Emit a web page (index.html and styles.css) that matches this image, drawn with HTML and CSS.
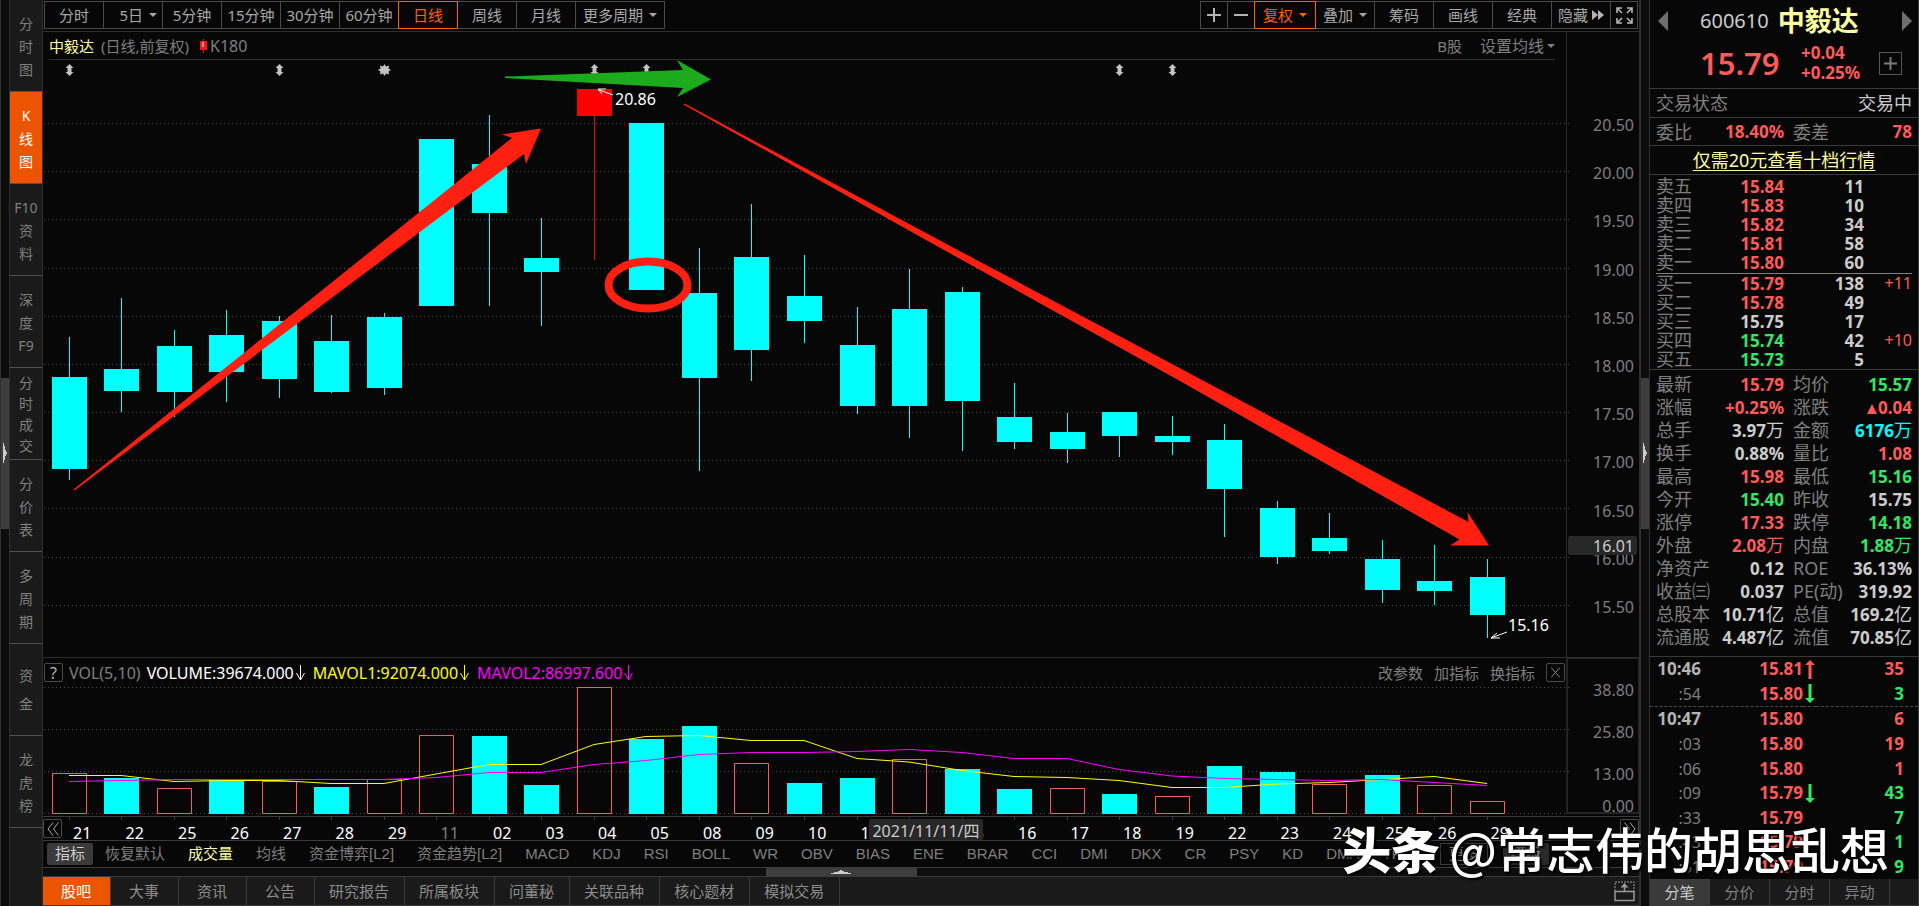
FILE: index.html
```html
<!DOCTYPE html>
<html lang="zh-CN">
<head>
<meta charset="utf-8">
<title>中毅达 600610</title>
<link rel="stylesheet" href="styles.css">
</head>
<body>
<div class="app">
  <div class="strip"><button class="strip-thumb" aria-label="展开左栏"><svg width="4" height="20" viewBox="0 0 4 20"><path d="M0 0h1v3h1v4h1v2h1v2h-1v2h-1v4h-1v3h-1z" fill="#ccc"/></svg></button></div>
  <nav class="side">
    <a class="side-item" href="#"><span>分</span><span>时</span><span>图</span></a>
    <a class="side-item active" href="#"><span>K</span><span>线</span><span>图</span></a>
    <a class="side-item" href="#"><span>F10</span><span>资</span><span>料</span></a>
    <a class="side-item" href="#"><span>深</span><span>度</span><span>F9</span></a>
    <a class="side-item four" href="#"><span>分</span><span>时</span><span>成</span><span>交</span></a>
    <a class="side-item" href="#"><span>分</span><span>价</span><span>表</span></a>
    <a class="side-item" href="#"><span>多</span><span>周</span><span>期</span></a>
    <a class="side-item two" href="#"><span>资</span><span>金</span></a>
    <a class="side-item" href="#"><span>龙</span><span>虎</span><span>榜</span></a>
  </nav>

  <main class="main">
    <header class="toolbar">
      <div class="group">
        <button class="btn">分时</button>
        <button class="btn menu">5日<i class="caret"></i></button>
        <button class="btn">5分钟</button>
        <button class="btn">15分钟</button>
        <button class="btn">30分钟</button>
        <button class="btn">60分钟</button>
        <button class="btn on">日线</button>
        <button class="btn">周线</button>
        <button class="btn">月线</button>
        <button class="btn more">更多周期<i class="caret"></i></button>
      </div>
      <div class="group">
        <button class="btn icon" aria-label="放大"><svg width="14" height="14" viewBox="0 0 14 14"><path d="M7 0v14M0 7h14" stroke="#b4b4b4" stroke-width="2"/></svg></button>
        <button class="btn icon" aria-label="缩小"><svg width="14" height="14" viewBox="0 0 14 14"><path d="M0 7h14" stroke="#b4b4b4" stroke-width="2"/></svg></button>
        <button class="btn on wide">复权<i class="caret"></i></button>
        <button class="btn">叠加<i class="caret"></i></button>
        <button class="btn">筹码</button>
        <button class="btn">画线</button>
        <button class="btn">经典</button>
        <button class="btn hide">隐藏<svg width="12" height="10" viewBox="0 0 12 10"><path d="M0 0l6 5-6 5zM6 0l6 5-6 5z" fill="#b4b4b4"/></svg></button>
        <button class="btn icon" aria-label="全屏"><svg width="17" height="17" viewBox="0 0 17 17" fill="none" stroke="#b4b4b4" stroke-width="1.6"><path d="M1 6V1h5M1 1l5 5M11 1h5v5M16 1l-5 5M1 11v5h5M1 16l5-5M11 16h5v-5M16 16l-5-5"/></svg></button>
      </div>
    </header>

    <section class="pane price">
      <div class="plot">
        <div class="plot-head">
          <h1 class="name">中毅达</h1>
          <span class="dim">(日线,前复权)</span>
          <svg class="k-icon" width="7" height="14" viewBox="0 0 7 14"><path d="M0 2h7v9h-7zM3 0h1v14h-1z" fill="#f01818"/><path d="M2 3h2v5h-2z" fill="#ff8a8a"/></svg>
          <span class="dim k180">K180</span>
          <a class="dim b-share" href="#">B股</a>
          <button class="plain ma-set">设置均线<i class="caret"></i></button>
        </div>
        <svg class="chart" viewBox="43 60 1523 597">
          <g class="grid">
            <path d="M44 123.500H1570M44 171.500H1570M44 219.500H1570M44 268.500H1570M44 316.500H1570M44 364.500H1570M44 412.500H1570M44 460.500H1570M44 508.500H1570M44 557.500H1570M44 605.500H1570"/>
          </g>
          <g fill="#c4c4c4">
            <path id="ud" d="M69.500 64l4 4h-2v4h2l-4 4l-4-4h2v-4h-2z"/>
            <use href="#ud" x="210"/><use href="#ud" x="525"/><use href="#ud" x="577"/><use href="#ud" x="1050"/><use href="#ud" x="1103"/>
            <path d="M384.500 64l1.500 2.500 3-1-.5 3 2.500 1.500-2.500 1.500.5 3-3-1-1.500 2.500-1.500-2.500-3 1 .5-3-2.500-1.500 2.500-1.500-.5-3 3 1z"/>
          </g>
          <path class="up" d="M577 89h35v27h-35zM594 116h1v144h-1z"/>
          <path class="down" d="M52 377h35v92h-35zM104 369h35v22h-35zM157 346h35v46h-35zM209 335h35v37h-35zM262 321h35v58h-35zM314 341h35v51h-35zM367 317h35v71h-35zM419 139h35v167h-35zM472 164h35v49h-35zM524 258h35v14h-35zM629 123h35v167h-35zM682 293h35v85h-35zM734 257h35v93h-35zM787 296h35v25h-35zM840 345h35v61h-35zM892 309h35v97h-35zM945 292h35v109h-35zM997 417h35v25h-35zM1050 432h35v17h-35zM1102 412h35v24h-35zM1155 436h35v6h-35zM1207 440h35v49h-35zM1260 508h35v49h-35zM1312 538h35v13h-35zM1365 559h35v31h-35zM1417 581h35v10h-35zM1470 577h35v38h-35z"/>
          <g class="wick">
            <path d="M69.500 337V480M121.500 298V412M174.500 330V417M226.500 310V402M279.500 316V398M331.500 315V393M384.500 313V395M489.500 115V306M541.500 218V326M699.500 248V471M751.500 204V381M804.500 255V343M857.500 307V414M909.500 269V438M962.500 287V451M1014.500 383V449M1067.500 413V463M1119.500 430V457M1172.500 416V455M1224.500 424V537M1277.500 501V564M1329.500 513V554M1382.500 540V603M1434.500 545V605M1487.500 559V638"/>
          </g>
          <g class="pointer">
            <path d="M613 95L598 89.500M606 89h-8l4 5M1507 632L1491 638M1497 633l-6 5h9"/>
          </g>
          <text class="tag" x="615" y="105">20.86</text>
          <text class="tag" x="1508" y="631">15.16</text>
          <path d="M505 76.500L683 70L677 60L711 79.500L677 97L683 88L505 78z" fill="#1cab1c"/>
          <g fill="#ff2012">
            <path d="M73.500 489.500L512 138L502 134.500L541 128.500L526 164L524 154L74.500 490.500z"/>
            <path d="M684.500 103.500L939 240L1202 380L1468.500 522L1467.500 512L1489 545.500H1450L1459.500 539.500L1180 381L926 240L683.500 104.500z"/>
          </g>
          <ellipse cx="648" cy="285" rx="39.500" ry="23.500" fill="none" stroke="#ff2012" stroke-width="8"/>
        </svg>
      </div>
      <div class="axis price-axis">
        <span>20.50</span><span>20.00</span><span>19.50</span><span>19.00</span><span>18.50</span><span>18.00</span><span>17.50</span><span>17.00</span><span>16.50</span><span>16.00</span><span>15.50</span>
        <b class="cursor-price">16.01</b>
      </div>
    </section>

    <section class="pane volume">
      <div class="plot">
        <div class="vol-head">
          <button class="sq" aria-label="帮助">?</button>
          <span class="dim vol-name">VOL(5,10)</span>
          <span class="v0">VOLUME:39674.000<svg class="dn" viewBox="0 0 9 16"><path d="M4.500 0v15M0.500 8l4 7 4-7"/></svg></span>
          <span class="v1">MAVOL1:92074.000<svg class="dn" viewBox="0 0 9 16"><path d="M4.500 0v15M0.500 8l4 7 4-7"/></svg></span>
          <span class="v2">MAVOL2:86997.600<svg class="dn" viewBox="0 0 9 16"><path d="M4.500 0v15M0.500 8l4 7 4-7"/></svg></span>
          <div class="vol-tools">
            <button class="plain">改参数</button><button class="plain">加指标</button><button class="plain">换指标</button>
            <button class="sq" aria-label="关闭"><svg width="9" height="11" viewBox="0 0 9 11"><path d="M0 0.500l9 10M9 0.500l-9 10" stroke="#8a8a8a"/></svg></button>
          </div>
        </div>
        <svg class="chart" viewBox="43 687 1523 130">
          <g class="grid">
            <path d="M44 687.500H1570M44 729.500H1570M44 771.500H1570M44 813.500H1570"/>
          </g>
          <path d="M43 816.500H1640M69.500 817v3M121.500 817v3M174.500 817v3M226.500 817v3M279.500 817v3M331.500 817v3M384.500 817v3M436.500 817v3M489.500 817v3M541.500 817v3M594.500 817v3M646.500 817v3M699.500 817v3M751.500 817v3M804.500 817v3M857.500 817v3M909.500 817v3M962.500 817v3M1014.500 817v3M1067.500 817v3M1119.500 817v3M1172.500 817v3M1224.500 817v3M1277.500 817v3M1329.500 817v3M1382.500 817v3M1434.500 817v3M1487.500 817v3" stroke="#3a3a3a"/>
          <path class="bar-up" d="M52.500 773.500h34v40h-34zM157.500 788.500h34v25h-34zM262.500 781.500h34v32h-34zM367.500 779.500h34v34h-34zM419.500 735.500h34v78h-34zM577.500 687.500h34v126h-34zM734.500 763.500h34v50h-34zM892.500 759.500h34v54h-34zM1050.500 788.500h34v25h-34zM1155.500 796.500h34v17h-34zM1312.500 784.500h34v29h-34zM1417.500 785.500h34v28h-34zM1470.500 801.500h34v12h-34z"/>
          <path class="down" d="M104 778h35v36h-35zM209 780h35v34h-35zM314 787h35v27h-35zM472 736h35v78h-35zM524 785h35v29h-35zM629 739h35v75h-35zM682 726h35v88h-35zM787 783h35v31h-35zM840 778h35v36h-35zM945 769h35v45h-35zM997 789h35v25h-35zM1102 794h35v20h-35zM1207 766h35v48h-35zM1260 772h35v42h-35zM1365 775h35v39h-35z"/>
          <polyline class="ma1" points="69,775.500 121,775.500 174,781.500 226,780.500 279,780.500 331,783.500 384,783.500 436,774 489,764.500 541,764.500 594,744.500 646,736.500 699,735.500 751,740.500 804,740.500 857,758.500 909,762 962,770.500 1014,776.500 1067,777.500 1119,780.500 1172,787.500 1224,787.500 1277,784 1329,782.500 1382,779.500 1434,776.500 1487,783.500"/>
          <polyline class="ma2" points="69,781.500 121,780.500 174,779.500 384,779.500 436,777.500 489,772.500 541,772.500 594,764.500 646,760.500 699,754.500 751,752.500 804,752.500 857,751.500 909,749.500 962,752.500 1014,758.500 1067,758.500 1119,769.500 1172,776 1224,778.500 1277,779.500 1329,780.500 1382,779.500 1434,782.500 1487,785.500"/>
        </svg>
      </div>
      <div class="axis vol-axis"><span>38.80</span><span>25.80</span><span>13.00</span><span>0.00</span></div>
    </section>

    <div class="dates">
      <button class="sq page" aria-label="向左"><svg width="12" height="14" viewBox="0 0 12 14"><path d="M6 0.500L1 7l5 6.500M11.500 0.500l-5 6.500 5 6.500"/></svg></button>
      <div class="days">
        <span>21</span><span>22</span><span>25</span><span>26</span><span>27</span><span>28</span><span>29</span><span class="dim">11</span><span>02</span><span>03</span><span>04</span><span>05</span><span>08</span><span>09</span><span>10</span><span>11</span><span>12</span><span>15</span><span>16</span><span>17</span><span>18</span><span>19</span><span>22</span><span>23</span><span>24</span><span>25</span><span>26</span><span>29</span>
      </div>
      <b class="cursor-date">2021/11/11/四</b>
      <button class="sq page" aria-label="向右"><svg width="12" height="14" viewBox="0 0 12 14"><path d="M0.500 0.500l5 6.500-5 6.500M6 0.500L11 7l-5 6.500"/></svg></button>
    </div>

    <nav class="indicators">
      <button class="ind chip">指标</button><button class="ind">恢复默认</button><button class="ind sel">成交量</button><button class="ind">均线</button><button class="ind">资金博弈[L2]</button><button class="ind">资金趋势[L2]</button><button class="ind">MACD</button><button class="ind">KDJ</button><button class="ind">RSI</button><button class="ind">BOLL</button><button class="ind">WR</button><button class="ind">OBV</button><button class="ind">BIAS</button><button class="ind">ENE</button><button class="ind">BRAR</button><button class="ind">CCI</button><button class="ind">DMI</button><button class="ind">DKX</button><button class="ind">CR</button><button class="ind">PSY</button><button class="ind">KD</button><button class="ind">DMA</button><button class="ind">TRIX</button><button class="ind outline">更多</button><button class="ind chip tpl">模板</button>
    </nav>

    <div class="hsplit"><button class="hthumb" aria-label="展开"><svg width="20" height="4" viewBox="0 0 20 4"><path d="M0 4v-1h3v-1h4v-1h2v-1h2v1h2v1h4v1h3v1z" fill="#ccc"/></svg></button></div>

    <footer class="tabs">
      <a class="tab active" href="#">股吧</a><a class="tab" href="#">大事</a><a class="tab" href="#">资讯</a><a class="tab" href="#">公告</a><a class="tab" href="#">研究报告</a><a class="tab" href="#">所属板块</a><a class="tab" href="#">问董秘</a><a class="tab" href="#">关联品种</a><a class="tab" href="#">核心题材</a><a class="tab" href="#">模拟交易</a>
      <button class="plain popout" aria-label="弹出"><svg width="21" height="21" viewBox="0 0 21 21" fill="none" stroke="#999"><path d="M1 10V1h19v9" stroke-dasharray="2 1"/><path d="M1 10.500h19v9H1zM10.500 10V4" stroke-width="1.500"/><path d="M6.500 6.500l4-4.500 4 4.500z" fill="#999" stroke="none"/></svg></button>
    </footer>
  </main>

  <div class="strip right"><button class="strip-thumb" aria-label="收起右栏"><svg width="4" height="20" viewBox="0 0 4 20"><path d="M0 0h1v3h1v4h1v2h1v2h-1v2h-1v4h-1v3h-1z" fill="#ccc"/></svg></button></div>

  <aside class="quote">
    <div class="q-title">
      <button class="plain" aria-label="上一只"><svg width="10" height="20" viewBox="0 0 10 20"><path d="M10 0v20L0 10z" fill="#6e6e6e"/></svg></button>
      <span class="code">600610</span>
      <strong class="q-name">中毅达</strong>
      <button class="plain next" aria-label="下一只"><svg width="10" height="20" viewBox="0 0 10 20"><path d="M0 0v20l10-10z" fill="#6e6e6e"/></svg></button>
    </div>
    <div class="q-price r">
      <strong class="big">15.79</strong>
      <div class="chg"><span>+0.04</span><span>+0.25%</span></div>
      <button class="add" aria-label="加自选"><svg width="13" height="13" viewBox="0 0 13 13"><path d="M6.500 0v13M0 6.500h13" stroke="#7a7a7a" stroke-width="2"/></svg></button>
    </div>
    <div class="line state"><span class="lab">交易状态</span><span class="trading">交易中</span></div>
    <div class="line ratio"><span class="lab">委比</span><b class="r">18.40%</b><span class="lab l2">委差</span><b class="r">78</b></div>
    <div class="line promo"><a href="#">仅需20元查看十档行情</a></div>

    <table class="book">
      <tr><th>卖五</th><td class="r">15.84</td><td>11</td><td></td></tr>
      <tr><th>卖四</th><td class="r">15.83</td><td>10</td><td></td></tr>
      <tr><th>卖三</th><td class="r">15.82</td><td>34</td><td></td></tr>
      <tr><th>卖二</th><td class="r">15.81</td><td>58</td><td></td></tr>
      <tr><th>卖一</th><td class="r">15.80</td><td>60</td><td></td></tr>
    </table>
    <table class="book buy">
      <tr><th>买一</th><td class="r">15.79</td><td>138</td><td class="r d">+11</td></tr>
      <tr><th>买二</th><td class="r">15.78</td><td>49</td><td></td></tr>
      <tr><th>买三</th><td>15.75</td><td>17</td><td></td></tr>
      <tr><th>买四</th><td class="g">15.74</td><td>42</td><td class="r d">+10</td></tr>
      <tr><th>买五</th><td class="g">15.73</td><td>5</td><td></td></tr>
    </table>

    <div class="stats-wrap">
    <table class="stats">
      <tr><th>最新</th><td class="r">15.79</td><th>均价</th><td class="g">15.57</td></tr>
      <tr><th>涨幅</th><td class="r">+0.25%</td><th>涨跌</th><td class="r"><svg width="10" height="10" viewBox="0 0 10 10"><path d="M5 0l5 10H0z" fill="#ff5a5a"/></svg>0.04</td></tr>
      <tr><th>总手</th><td>3.97<i>万</i></td><th>金额</th><td class="c">6176<i>万</i></td></tr>
      <tr><th>换手</th><td>0.88%</td><th>量比</th><td class="r">1.08</td></tr>
      <tr><th>最高</th><td class="r">15.98</td><th>最低</th><td class="g">15.16</td></tr>
      <tr><th>今开</th><td class="g">15.40</td><th>昨收</th><td>15.75</td></tr>
      <tr><th>涨停</th><td class="r">17.33</td><th>跌停</th><td class="g">14.18</td></tr>
      <tr><th>外盘</th><td class="r">2.08<i>万</i></td><th>内盘</th><td class="g">1.88<i>万</i></td></tr>
      <tr><th>净资产</th><td>0.12</td><th>ROE</th><td>36.13%</td></tr>
      <tr><th>收益㈢</th><td>0.037</td><th>PE(动)</th><td>319.92</td></tr>
      <tr><th>总股本</th><td>10.71<i>亿</i></td><th>总值</th><td>169.2<i>亿</i></td></tr>
      <tr><th>流通股</th><td>4.487<i>亿</i></td><th>流值</th><td>70.85<i>亿</i></td></tr>
    </table>
    </div>

    <div class="ticks-wrap">
    <table class="ticks">
      <tr><th class="full">10:46</th><td class="r">15.81</td><td class="ar"><svg width="10" height="19" viewBox="0 0 10 19"><path d="M5 0l5 5H6.500v14h-3V5H0z" fill="#ff5a5a"/></svg></td><td class="r">35</td></tr>
      <tr><th>:54</th><td class="r">15.80</td><td class="ar"><svg width="10" height="19" viewBox="0 0 10 19"><path d="M5 19l5-5H6.500V0h-3v14H0z" fill="#33e666"/></svg></td><td class="g">3</td></tr>
      <tr class="minute"><th class="full">10:47</th><td class="r">15.80</td><td></td><td class="r">6</td></tr>
      <tr><th>:03</th><td class="r">15.80</td><td></td><td class="r">19</td></tr>
      <tr><th>:06</th><td class="r">15.80</td><td></td><td class="r">1</td></tr>
      <tr><th>:09</th><td class="r">15.79</td><td class="ar"><svg width="10" height="19" viewBox="0 0 10 19"><path d="M5 19l5-5H6.500V0h-3v14H0z" fill="#33e666"/></svg></td><td class="g">43</td></tr>
      <tr><th>:33</th><td class="r">15.79</td><td></td><td class="g">7</td></tr>
      <tr><th>:43</th><td class="r">15.79</td><td></td><td class="g">1</td></tr>
      <tr><th>:51</th><td class="r">15.79</td><td></td><td class="g">9</td></tr>
    </table>
    </div>
    <nav class="q-tabs"><a class="active" href="#">分笔</a><a href="#">分价</a><a href="#">分时</a><a href="#">异动</a></nav>
  </aside>
</div>
<div class="watermark"><b>头条</b><span>@常志伟的胡思乱想</span></div>
</body>
</html>
```

FILE: styles.css
```css
* { box-sizing: border-box; }

body {
  margin: 0;
  background: #070707;
  color: #a8a8a8;
  font-family: "Noto Sans", "Noto Sans CJK SC", sans-serif;
  font-size: 15px;
  line-height: 20px;
  position: relative;
  overflow-x: hidden;
}

a { color: inherit; text-decoration: none; }
button {
  background: none;
  border: 0;
  padding: 0;
  margin: 0;
  color: inherit;
  font: inherit;
  white-space: nowrap;
}
svg { display: block; flex: none; }
table { border-collapse: collapse; table-layout: fixed; width: 100%; }
th, td { padding: 0; white-space: nowrap; }

.app {
  display: grid;
  grid-template-columns: 10px 32px minmax(0, 1fr) 10px 269px;
  min-height: 100vh;
}

.r { color: #ff5a5a; }
.g { color: #33e666; }
.c { color: #00ffff; }
.dim { color: #7f7f7f; }

.caret {
  border: 4px solid transparent;
  border-top: 4px solid currentColor;
  border-bottom: 0;
}

/* Collapsible edge strips */
.strip {
  background: #0d0d0d;
  border: solid #303030;
  border-width: 0 1px;
  display: flex;
  align-items: center;
}
.strip-thumb {
  width: 100%;
  height: 151px;
  background: #3d3d3d;
  display: flex;
  align-items: center;
  justify-content: center;
}

/* Left navigation */
.side { background: #1a1a1a; }
.side-item {
  display: flex;
  flex-direction: column;
  align-items: center;
  justify-content: center;
  height: 92px;
  border-bottom: 1px solid #505050;
  color: #7f7f7f;
  font-size: 14px;
  line-height: 23px;
  padding-top: 1px;
}
.side-item.four { line-height: 21px; }
.side-item.two { line-height: 28px; }
.side-item.active { background: #eb5500; color: #fff; }

/* Main column */
.main {
  display: flex;
  flex-direction: column;
  border: solid #2e2e2e;
  border-width: 0 1px;
}
.toolbar {
  display: flex;
  justify-content: space-between;
  height: 32px;
  padding: 1px 1px 0;
  border-bottom: 1px solid #2e2e2e;
}
.group { display: flex; }
.btn {
  display: flex;
  align-items: center;
  justify-content: center;
  gap: 6px;
  width: 60px;
  height: 28px;
  margin-right: -1px;
  border: 1px solid #4a4a4a;
}
.group .btn:last-child { margin-right: 0; }
.btn.menu { justify-content: flex-end; padding-right: 5px; }
.btn.more { width: 90px; }
.btn.icon { width: 28px; }
.btn.wide { width: 62px; }
.btn.hide { gap: 4px; }
.btn.on { color: #ff6000; border-color: #ff6000; position: relative; }

.pane { display: grid; grid-template-columns: minmax(0, 1fr) 73px; }
.price { flex: 1; }
.plot { display: flex; flex-direction: column; }
.plot-head {
  display: flex;
  align-items: center;
  height: 28px;
  margin: 0 11px 0 6px;
  border-bottom: 1px solid #2e2e2e;
}
.name {
  margin: 0 7px 0 0;
  font-size: 15px;
  font-weight: 400;
  color: #ffffa0;
}
.k-icon { margin: 0 3px 0 11px; }
.k180 { font-size: 16px; }
.b-share { margin-left: auto; margin-right: 18px; }
.plain { color: #7f7f7f; }
.ma-set { display: flex; align-items: center; gap: 3px; font-size: 16px; }
.chart { display: block; width: 100%; height: auto; overflow: visible; }

.grid { stroke: #4c4c4c; stroke-dasharray: 1 3; }
.down { fill: #00ffff; }
.up { fill: #ff0000; }
.wick { stroke: #00ffff; }
.pointer { stroke: #fff; fill: none; }
.tag { fill: #fff; font-size: 16px; }
.bar-up { fill: none; stroke: #ff5a5a; }
.ma1 { fill: none; stroke: #ffff00; }
.ma2 { fill: none; stroke: #ff00ff; }

.axis {
  position: relative;
  border-left: 1px solid #2e2e2e;
  padding-right: 5px;
  color: #7f7f7f;
  font-size: 16px;
  text-align: right;
}
.price-axis {
  display: flex;
  flex-direction: column;
  justify-content: space-between;
  padding-top: 83px;
  padding-bottom: 40px;
}
.cursor-price {
  position: absolute;
  top: 504px;
  left: 1px;
  right: 2px;
  height: 19px;
  line-height: 20px;
  padding-right: 3px;
  background: #272727;
  border-radius: 2px;
  color: #ccc;
  font-weight: 400;
}

/* Volume pane */
.volume { border-top: 1px solid #2e2e2e; }
.vol-head {
  display: flex;
  align-items: center;
  height: 29px;
  padding: 0 1px;
  font-size: 16px;
}
.sq {
  display: flex;
  align-items: center;
  justify-content: center;
  width: 19px;
  height: 19px;
  border: 1px solid #4a4a4a;
  border-radius: 2px;
  color: #b4b4b4;
}
.vol-name { margin: 0 6px; }
.v0, .v1, .v2 { display: flex; align-items: center; gap: 2px; margin-right: 8px; }
.v0 { color: #fff; }
.v1 { color: #ffff00; }
.v2 { color: #ff00ff; }
.dn { width: 9px; height: 16px; fill: none; stroke: currentColor; }
.vol-tools { display: flex; align-items: center; gap: 11px; margin-left: auto; font-size: 15px; }
.vol-axis {
  display: grid;
  grid-template-rows: 42px 42px 32px 16px;
  align-content: start;
  padding-top: 21px;
  padding-right: 4px;
  margin-bottom: 3px;
  border: solid #242424;
  border-width: 1px 1px 2px 2px;
}

/* Date axis */
.dates {
  position: relative;
  display: flex;
  align-items: flex-start;
  height: 24px;
  padding-top: 2px;
  border-bottom: 1px solid #3a3a3a;
}
.page svg { fill: none; stroke: #a8a8a8; }
.days {
  flex: 1;
  display: grid;
  grid-template-columns: repeat(28, 1fr);
  margin: 4px 94px 0 -6px;
  color: #fff;
  font-size: 16px;
  text-align: center;
}
.cursor-date {
  position: absolute;
  left: 826px;
  top: 2px;
  width: 114px;
  height: 21px;
  background: #272727;
  border-radius: 2px;
  color: #ccc;
  font-size: 16px;
  font-weight: 400;
  line-height: 24px;
  text-align: center;
  white-space: nowrap;
}

.indicators {
  display: flex;
  align-items: center;
  gap: 23px;
  height: 27px;
  padding-left: 4px;
  border-bottom: 1px solid #3a3a3a;
  font-family: "Liberation Sans", "Noto Sans CJK SC", sans-serif;
}
.ind { color: #7f7f7f; line-height: 22px; }
.ind.chip { background: #3a3a3a; color: #ccc; padding: 0 8px; margin-right: -11px; border-radius: 2px; }
.ind.sel { color: #ffffa0; }
.ind.outline { border: 1px solid #3a3a3a; line-height: 20px; padding: 0 8px; }
.ind.tpl { background: #2a2a2a; color: #a8a8a8; margin-left: -8px; }

.hsplit { display: flex; justify-content: center; height: 8px; background: #0d0d0d; }
.hthumb {
  display: flex;
  align-items: center;
  justify-content: center;
  width: 151px;
  background: #3d3d3d;
}
.tabs {
  display: flex;
  height: 30px;
  background: #1a1a1a;
  border: solid #3a3a3a;
  border-width: 1px 0;
}
.tab {
  padding: 0 19px 0 18px;
  line-height: 28px;
  color: #8c8c8c;
  border-right: 1px solid #3a3a3a;
}
.tab:nth-child(n+5) { padding: 0 15px 0 14px; }
.tab.active { background: #eb5500; color: #fff; }
.popout { margin-left: auto; margin-right: 4px; }

/* Quote panel */
.quote {
  display: flex;
  flex-direction: column;
  border-right: 1px solid #3a3a3a;
  color: #ccc;
  font-size: 17px;
}
.q-title { display: flex; align-items: center; height: 42px; padding: 0 6px 0 8px; }
.code { margin: 0 9px 0 32px; font-size: 20px; color: #ccc; }
.q-name { font-size: 27px; color: #ffffa0; line-height: 36px; }
.next { margin-left: auto; }
.q-price {
  display: grid;
  grid-template-columns: 101px 78px 23px;
  align-items: center;
  height: 47px;
  padding: 0 0 4px 50px;
  border-bottom: 1px solid #3a3a3a;
  font-weight: 700;
}
.big { font-size: 31px; line-height: 36px; font-weight: 600; }
.chg { display: grid; }
.add {
  display: flex;
  align-items: center;
  justify-content: center;
  height: 23px;
  border: 1px solid #555;
}
.lab { color: #7f7f7f; font-size: 18px; }
.line {
  display: flex;
  align-items: center;
  padding: 0 6px;
  border-bottom: 1px solid #3a3a3a;
}
.state { justify-content: space-between; height: 29px; font-size: 18px; }
.ratio { display: grid; grid-template-columns: 54px 74px 64px 64px; height: 28px; }
.ratio b { text-align: right; }
.l2 { padding-left: 9px; }
.promo { justify-content: center; height: 29px; font-size: 18px; color: #ffffa0; }
.promo a { text-decoration: underline; text-underline-offset: 3px; }

.book {
  width: auto;
  margin: 2px 6px 0;
  line-height: 19px;
  font-weight: 700;
  text-align: right;
}
.book th, .stats th { color: #7f7f7f; font-size: 18px; font-weight: 400; text-align: left; }
.book th { width: 54px; }
.book td { width: 80px; }
.book td:nth-child(2) { width: 74px; }
.book td:last-child { width: 48px; }
.book .d { font-size: 16px; font-weight: 400; }
.book.buy { margin-top: 1px; border-top: 1px solid #7f7f7f; }

.stats-wrap { padding: 3px 6px 7px; border: solid #3a3a3a; border-width: 1px 0; }
.stats { line-height: 23px; font-weight: 700; text-align: right; }
.stats th:nth-child(1) { width: 54px; }
.stats th:nth-child(3) { width: 64px; padding-left: 9px; }
.stats td:nth-child(2) { width: 74px; }
.stats i { font-size: 18px; font-style: normal; font-weight: 400; }
.stats td svg { display: inline; margin-right: 1px; }

.ticks-wrap { flex: 1; display: flex; }
.ticks { font-weight: 700; text-align: right; }
.ticks th { width: 51px; color: #7f7f7f; font-size: 16px; font-weight: 400; }
.ticks th.full { color: #b4b4b4; font-size: 17px; font-weight: 700; }
.ticks td:nth-child(2) { width: 102px; }
.ticks td:nth-child(3) { width: 13px; }
.ticks td:nth-child(4) { padding-right: 14px; }
.ar svg { margin-left: 2px; }
.minute { border-top: 1px dashed #4a4a4a; }

.q-tabs {
  display: grid;
  grid-template-columns: repeat(4, 60px) 1fr;
  height: 27px;
  background: #1a1a1a;
  border-bottom: 1px solid #3a3a3a;
  font-size: 15px;
  line-height: 27px;
  text-align: center;
  color: #7f7f7f;
}
.q-tabs a { border-right: 1px solid #3a3a3a; }
.q-tabs .active { background: #3a3a3a; color: #ccc; }

.watermark {
  position: absolute;
  right: 30px;
  bottom: 30px;
  display: flex;
  gap: 9px;
  color: #fff;
  font-family: "Noto Sans CJK SC", sans-serif;
  font-size: 49px;
  font-weight: 500;
  line-height: 56px;
  text-shadow: 2px 2px 2px #000, 0 0 2px #000;
  white-space: nowrap;
  pointer-events: none;
}
.watermark b { font-weight: 900; }
```
